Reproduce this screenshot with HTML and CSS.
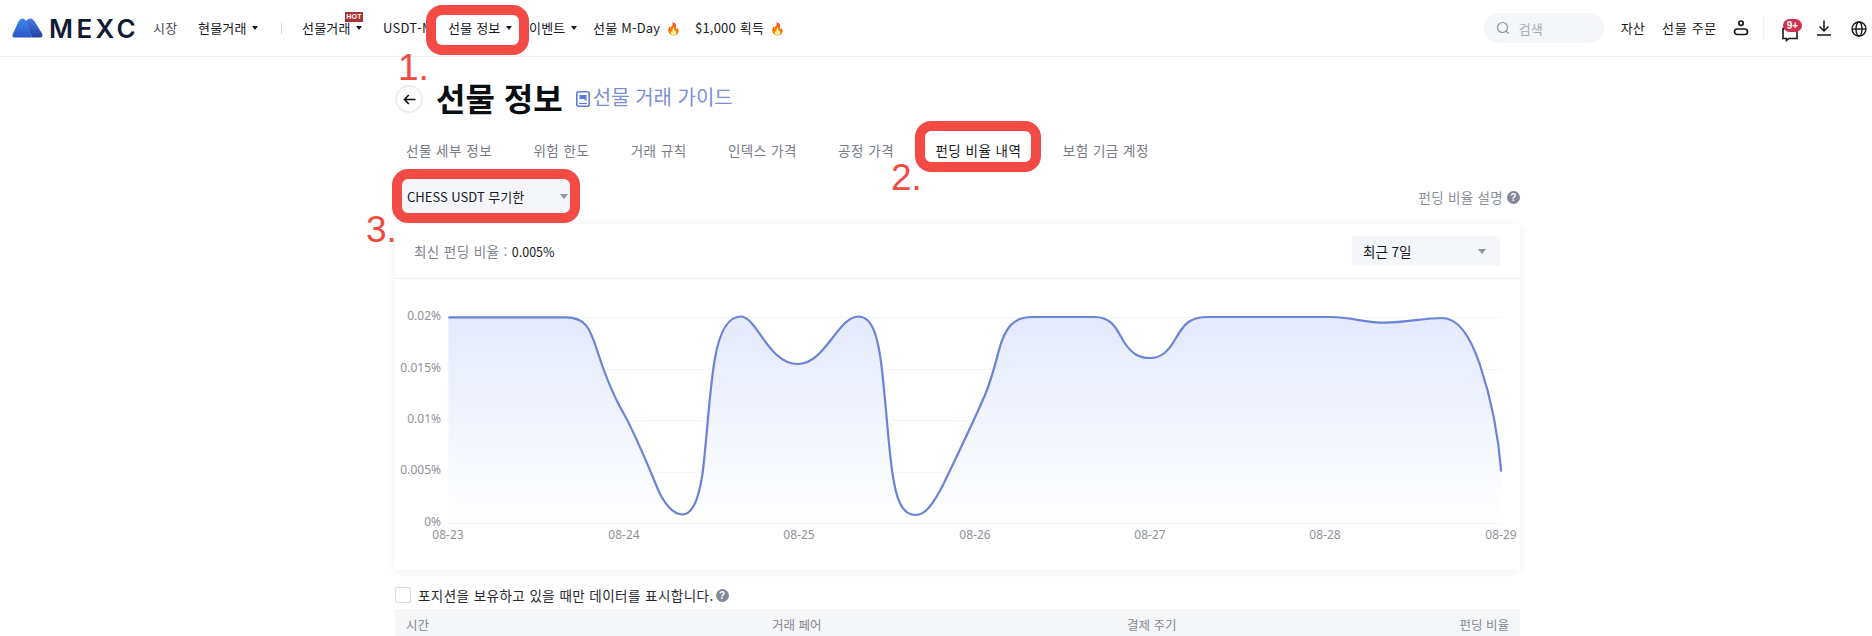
FILE: index.html
```html
<!DOCTYPE html>
<html lang="ko">
<head>
    <meta charset="UTF-8">
    <meta name="viewport" content="width=device-width, initial-scale=1.0">
    <title>선물 정보</title>
    <link rel="stylesheet" href="styles.css">
</head>
<body>
    <header class="topbar">
        <a class="logo">
            <svg class="logo-mark" width="31" height="20" viewBox="0 0 31 20">
                <defs>
                    <linearGradient id="logo-a" x1="0" y1="0" x2="0" y2="1">
                        <stop offset="0" stop-color="#3b8af0"/>
                        <stop offset="1" stop-color="#2a55c8"/>
                    </linearGradient>
                    <linearGradient id="logo-b" x1="0" y1="0" x2="0" y2="1">
                        <stop offset="0" stop-color="#4a7ce8"/>
                        <stop offset="1" stop-color="#1f3f9e"/>
                    </linearGradient>
                </defs>
                <path d="M2.500 19.500 Q-0.500 19.500 0.800 16 L6.500 3.500 Q8.500 0 11 0.500 Q13.500 1 15 4.500 L20 19.500 Z" fill="url(#logo-a)"/>
                <path d="M14 3 Q16 0 19 0.500 Q21.500 1 23 4 L30 15.500 Q31.500 19.500 28 19.500 L20 19.500 Z" fill="url(#logo-b)"/>
            </svg>
            <span class="logo-text">MEXC</span>
        </a>
        <nav class="nav">
            <a class="nav-item item-market">시장</a>
            <a class="nav-item item-spot">현물거래<i class="caret"></i></a>
            <span class="nav-sep"></span>
            <a class="nav-item item-futures">선물거래<i class="caret"></i><em class="hot">HOT</em></a>
            <a class="nav-item item-usdt">USDT-M</a>
            <a class="nav-item item-info">선물 정보<i class="caret"></i></a>
            <a class="nav-item item-event">이벤트<i class="caret"></i></a>
            <a class="nav-item item-mday">선물 M-Day <span class="fire">🔥</span></a>
            <a class="nav-item item-prize">$1,000 획득 <span class="fire">🔥</span></a>
        </nav>
        <div class="top-right">
            <div class="search">
                <svg width="14" height="14" viewBox="0 0 14 14" fill="none" stroke="#8e939f" stroke-width="1.200"><circle cx="6.500" cy="6.500" r="5"/><path d="M10.200 10.200 L12.500 12.500"/></svg>
                <span>검색</span>
            </div>
            <a class="nav-item item-assets">자산</a>
            <a class="nav-item item-orders">선물 주문</a>
            <svg class="icon-user" width="16" height="16" viewBox="0 0 16 16" fill="none" stroke="#16181d" stroke-width="1.700"><circle cx="8" cy="3.200" r="2.200"/><rect x="1.500" y="9" width="13" height="5.500" rx="2.700"/></svg>
            <span class="top-sep"></span>
            <div class="msg">
                <svg width="18" height="15" viewBox="0 0 18 15" fill="none" stroke="#16181d" stroke-width="1.600"><path d="M2 1.500 H16 V11.500 H8 L5.500 13.500 V11.500 H2 Z"/></svg>
                <span class="badge">9+</span>
            </div>
            <svg class="icon-down" width="14" height="16" viewBox="0 0 14 16" fill="none" stroke="#16181d" stroke-width="1.500"><path d="M7 0.500 V10.500 M2.500 6.500 L7 11 L11.500 6.500 M0 15 H14"/></svg>
            <svg class="icon-globe" width="16" height="16" viewBox="0 0 16 16" fill="none" stroke="#16181d" stroke-width="1.400"><circle cx="8" cy="8" r="7"/><ellipse cx="8" cy="8" rx="3" ry="7"/><path d="M1 8 H15"/></svg>
        </div>
    </header>

    <main class="page">
        <div class="title-row">
            <span class="back">
                <svg width="13" height="11" viewBox="0 0 13 11" fill="none" stroke="#111" stroke-width="1.700"><path d="M12.500 5.500 H1.500 M5.800 1 L1.500 5.500 L5.800 10"/></svg>
            </span>
            <h1>선물 정보</h1>
            <a class="guide">
                <svg width="14" height="16" viewBox="0 0 14 16"><rect x="0.800" y="0.800" width="12.400" height="14.400" rx="2" fill="none" stroke="#5b7bd5" stroke-width="1.600"/><path d="M3.500 4 H10.500 V10 L7.500 8 L3.500 8 Z" fill="#5b7bd5"/><path d="M3 12.500 H11" stroke="#5b7bd5" stroke-width="1.200"/></svg>
                <span>선물 거래 가이드</span>
            </a>
        </div>

        <div class="tabs">
            <a class="tab">선물 세부 정보</a>
            <a class="tab">위험 한도</a>
            <a class="tab">거래 규칙</a>
            <a class="tab">인덱스 가격</a>
            <a class="tab">공정 가격</a>
            <a class="tab tab-active">펀딩 비율 내역</a>
            <a class="tab">보험 기금 계정</a>
        </div>

        <div class="toolbar">
            <div class="select select-pair"><span>CHESS USDT 무기한</span><i class="caret caret-gray"></i></div>
            <a class="explain">펀딩 비율 설명<span class="help">?</span></a>
        </div>

        <section class="card">
            <div class="card-head">
                <div class="latest">최신 펀딩 비율 : <b>0.005%</b></div>
                <div class="select select-range"><span>최근 7일</span><i class="caret caret-gray"></i></div>
            </div>
            <svg class="chart" width="1125" height="291" viewBox="395 279 1125 291">
                <defs>
                    <linearGradient id="area-fill" x1="0" y1="0" x2="0" y2="1">
                        <stop offset="0" stop-color="#e4eafc"/>
                        <stop offset="1" stop-color="#ffffff"/>
                    </linearGradient>
                </defs>
                <g class="grid">
                    <path d="M448 317.500 H1501"/>
                    <path d="M448 369.500 H1501"/>
                    <path d="M448 420.500 H1501"/>
                    <path d="M448 472.500 H1501"/>
                    <path d="M448 523.500 H1501"/>
                </g>
                <path fill="url(#area-fill)" d="M448.400 317.300 L566 317.300 C585 317.300 590 328 597 350 C604 372 610 388 620 407 C635 432 648 466 660 494 C668 509 675 514.500 682.600 514.500 C692 514.500 699 500 703 470 C708 425 710 385 715 358 C720 330 728 316.500 740.700 316.500 C757 316.500 768 364 798 364 C825 364 838 316.500 858.400 316.500 C872 316.500 878 335 882 370 C886 405 888 440 892 470 C896 500 902 515 915.700 515 C925 515 933 505 944 483 C955 460 972 425 985 395 C992 378 995 365 999 350 C1005 328 1013 317 1032 317 L1094 317 C1112 317 1116 328 1124 342 C1132 354 1139 358 1150 358 C1161 358 1168 352 1176 338 C1184 324 1190 317 1208 317 L1331 317 C1350 317 1365 322.700 1385 322.700 C1405 322.700 1425 318 1442 318 C1458 318 1470 335 1480 365 C1490 395 1498 430 1501.200 471.700 L1501.200 523 L448.400 523 Z"/>
                <path class="line" d="M448.400 317.300 L566 317.300 C585 317.300 590 328 597 350 C604 372 610 388 620 407 C635 432 648 466 660 494 C668 509 675 514.500 682.600 514.500 C692 514.500 699 500 703 470 C708 425 710 385 715 358 C720 330 728 316.500 740.700 316.500 C757 316.500 768 364 798 364 C825 364 838 316.500 858.400 316.500 C872 316.500 878 335 882 370 C886 405 888 440 892 470 C896 500 902 515 915.700 515 C925 515 933 505 944 483 C955 460 972 425 985 395 C992 378 995 365 999 350 C1005 328 1013 317 1032 317 L1094 317 C1112 317 1116 328 1124 342 C1132 354 1139 358 1150 358 C1161 358 1168 352 1176 338 C1184 324 1190 317 1208 317 L1331 317 C1350 317 1365 322.700 1385 322.700 C1405 322.700 1425 318 1442 318 C1458 318 1470 335 1480 365 C1490 395 1498 430 1501.200 471.700"/>
                <g class="y-labels">
                    <text x="441" y="320">0.02%</text>
                    <text x="441" y="372">0.015%</text>
                    <text x="441" y="423">0.01%</text>
                    <text x="441" y="474">0.005%</text>
                    <text x="441" y="526">0%</text>
                </g>
                <g class="x-labels">
                    <text x="448" y="539">08-23</text>
                    <text x="624" y="539">08-24</text>
                    <text x="799" y="539">08-25</text>
                    <text x="975" y="539">08-26</text>
                    <text x="1150" y="539">08-27</text>
                    <text x="1325" y="539">08-28</text>
                    <text x="1501" y="539">08-29</text>
                </g>
            </svg>
        </section>

        <label class="only-pos">
            <span class="checkbox"></span>
            <span>포지션을 보유하고 있을 때만 데이터를 표시합니다.</span>
            <span class="help">?</span>
        </label>

        <div class="table-head">
            <span class="col col-time">시간</span>
            <span class="col col-pair">거래 페어</span>
            <span class="col col-cycle">결제 주기</span>
            <span class="col col-rate">펀딩 비율</span>
        </div>
    </main>

    <!-- red marks drawn over the screenshot -->
    <div class="mark mark-1"></div>
    <div class="mark mark-2"></div>
    <div class="mark mark-3"></div>
    <span class="mark-num num-1">1.</span>
    <span class="mark-num num-2">2.</span>
    <span class="mark-num num-3">3.</span>
</body>
</html>
```

FILE: styles.css
```css
* {
    box-sizing: border-box;
}
html, body {
    height: 100%;
    overflow: hidden;
}
body {
    margin: 0;
    position: relative;
    background-color: white;
    color: #16181d;
    font-family: "Noto Sans CJK KR", "Noto Sans", sans-serif;
    font-size: 13px;
}
i, em {
    font-style: normal;
}
.topbar {
    display: flex;
    align-items: center;
    height: 57px;
    border-bottom: 1px solid #eeeff2;
    padding-left: 12px;
}
.logo {
    display: flex;
    align-items: center;
    width: 141px;
    flex: none;
}
.logo-text {
    margin-left: 6px;
    font-family: Inter, sans-serif;
    font-size: 26px;
    font-weight: 600;
    letter-spacing: 3.4px;
    color: #101a33;
}
.nav {
    display: flex;
    align-items: center;
    flex: 1;
}
.nav-item {
    position: relative;
    display: flex;
    align-items: center;
    font-size: 13px;
    letter-spacing: 0.2px;
    white-space: pre;
    line-height: 20px;
}
.item-market {
    width: 45px;
    color: #45484f;
}
.item-spot {
    width: 83px;
}
.nav-sep {
    width: 1px;
    height: 11px;
    background: #d6d8dd;
    margin-right: 20px;
}
.item-futures {
    width: 81px;
}
.item-usdt {
    width: 65px;
}
.item-info {
    width: 81px;
}
.item-event {
    width: 64px;
}
.item-mday {
    width: 102px;
}
.hot {
    position: absolute;
    left: 43px;
    top: -6px;
    width: 18px;
    height: 10px;
    background: #a83232;
    color: white;
    font-family: "Liberation Sans", sans-serif;
    font-size: 7px;
    font-weight: bold;
    line-height: 10px;
    text-align: center;
}
.caret {
    display: inline-block;
    width: 0;
    height: 0;
    margin-left: 5.500px;
    border-left: 3px solid transparent;
    border-right: 3px solid transparent;
    border-top: 4px solid #16181d;
}
.caret-gray {
    border-left-width: 4px;
    border-right-width: 4px;
    border-top: 5px solid #8f939d;
}
.fire {
    font-size: 12px;
    margin-left: 2px;
}
.top-right {
    display: flex;
    align-items: center;
    padding-right: 5px;
}
.search {
    display: flex;
    align-items: center;
    width: 120px;
    height: 30px;
    border-radius: 15px;
    background: #f4f6f9;
    padding-left: 12px;
    color: #a5a9b3;
    gap: 9px;
    margin-right: 17px;
}
.item-assets {
    margin-right: 17px;
}
.item-orders {
    margin-right: 16px;
    letter-spacing: 0.7px;
}
.icon-user {
    flex: none;
}
.top-sep {
    width: 1px;
    height: 24px;
    background: #f0f1f3;
    margin: 0 17px 0 14px;
}
.msg {
    position: relative;
    width: 18px;
    height: 15px;
    margin-top: 12px;
    margin-right: 18px;
}
.msg svg {
    display: block;
}
.badge {
    position: absolute;
    left: 2px;
    top: -8px;
    width: 19px;
    height: 13px;
    border-radius: 7px;
    background: #d2304f;
    color: white;
    font-family: "Liberation Sans", sans-serif;
    font-size: 10px;
    font-weight: bold;
    line-height: 13px;
    text-align: center;
}
.icon-down {
    margin-right: 20px;
}
.icon-globe {
    margin-top: 2px;
}
.page {
    width: 1125px;
    margin-left: 395px;
}
.title-row {
    display: flex;
    align-items: center;
    height: 28px;
    margin-top: 28px;
}
.back {
    display: flex;
    align-items: center;
    justify-content: center;
    width: 28px;
    height: 28px;
    border-radius: 50%;
    border: 2px solid #eceef1;
    margin-right: 13px;
}
h1 {
    margin: 0 0 4px;
    font-size: 32px;
    line-height: 28px;
    font-weight: 700;
    color: #0c0e12;
}
.guide {
    display: flex;
    align-items: center;
    margin-left: 13px;
    color: #7d90d3;
    font-size: 20px;
    line-height: 28px;
}
.guide span {
    margin-bottom: 4px;
}
.guide svg {
    margin-right: 3px;
}
.tabs {
    display: flex;
    align-items: center;
    height: 30px;
    margin-top: 22px;
    padding-left: 11px;
}
.tab {
    color: #777b85;
    font-size: 13.500px;
    letter-spacing: 0.5px;
    margin-right: 41.300px;
    white-space: nowrap;
}
.tab-active {
    color: #16181d;
}
.toolbar {
    display: flex;
    align-items: center;
    justify-content: space-between;
    height: 34px;
    margin-top: 14px;
    padding-left: 6px;
}
.select {
    display: flex;
    align-items: center;
    justify-content: space-between;
    background: #f4f6f9;
}
.select-pair {
    width: 170px;
    height: 34px;
    padding: 0 3px 0 6px;
}
.select-range {
    width: 148px;
    height: 30px;
    padding: 0 14px 0 11px;
    border-radius: 2px;
    font-size: 13.500px;
}
.explain {
    display: flex;
    align-items: center;
    color: #8b8f99;
    font-size: 13.500px;
    letter-spacing: 0.3px;
    position: relative;
    top: 1px;
}
.help {
    display: inline-block;
    width: 13px;
    height: 13px;
    margin-left: 4px;
    border-radius: 50%;
    background: #83889a;
    color: white;
    font-family: "Liberation Sans", sans-serif;
    font-size: 10px;
    font-weight: bold;
    line-height: 13px;
    text-align: center;
}
.card {
    height: 346px;
    margin-top: 11px;
    box-shadow: 0 1px 10px rgba(20, 30, 60, 0.07);
}
.card-head {
    display: flex;
    align-items: center;
    justify-content: space-between;
    height: 55px;
    padding: 0 20px 0 19px;
    border-bottom: 1px solid #eeeff2;
}
.latest {
    color: #80848f;
    font-size: 13.500px;
    letter-spacing: 0.4px;
}
.latest b {
    color: #16181d;
    font-size: 12.500px;
    font-weight: 400;
    letter-spacing: 0;
}
.chart {
    display: block;
}
.grid path {
    stroke: #f4f5f8;
    stroke-width: 1;
    fill: none;
}
.line {
    fill: none;
    stroke: #6a83d6;
    stroke-width: 2.200;
    stroke-linejoin: round;
}
.chart text {
    font-family: "Noto Sans", sans-serif;
    font-size: 12px;
    fill: #8f9299;
}
.y-labels text {
    text-anchor: end;
}
.x-labels text {
    text-anchor: middle;
}
.only-pos {
    display: flex;
    align-items: center;
    height: 16px;
    margin-top: 17px;
    font-size: 13.500px;
    letter-spacing: 0.45px;
    color: #26282e;
}
.checkbox {
    width: 16px;
    height: 16px;
    border: 1px solid #d9dbe0;
    border-radius: 2px;
    margin-right: 7px;
}
.only-pos .help {
    margin-left: 2px;
    letter-spacing: 0;
}
.table-head {
    display: flex;
    align-items: center;
    height: 40px;
    margin-top: 6px;
    padding: 0 11px 10px;
    background: #f5f6f8;
    color: #85888f;
    font-size: 12.500px;
}
.col-time {
    width: 366px;
}
.col-pair {
    width: 355px;
}
.col-cycle {
    flex: 1;
}
/* annotations */
.mark {
    position: absolute;
    border: 10px solid #f44a45;
    border-radius: 16px;
}
.mark-1 {
    left: 426px;
    top: 5px;
    width: 103px;
    height: 50px;
}
.mark-2 {
    left: 915px;
    top: 121px;
    width: 126px;
    height: 51px;
}
.mark-3 {
    left: 392px;
    top: 169px;
    width: 188px;
    height: 54px;
}
.mark-num {
    position: absolute;
    color: #f04b43;
    font-family: "Liberation Sans", sans-serif;
    font-size: 37px;
    line-height: 36px;
}
.num-1 {
    left: 398px;
    top: 50px;
}
.num-2 {
    left: 891px;
    top: 160px;
}
.num-3 {
    left: 366px;
    top: 212px;
}
```
